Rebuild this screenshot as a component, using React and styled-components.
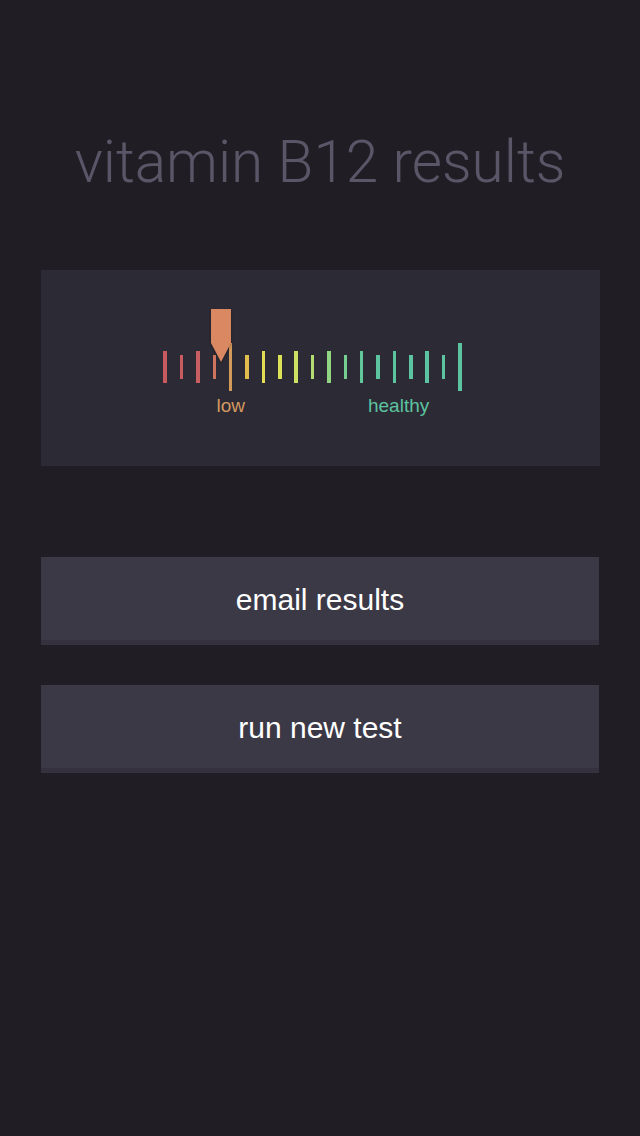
import React from "react";
import styled, { createGlobalStyle } from "styled-components";

const GlobalStyle = createGlobalStyle`
  html, body {
    margin: 0;
    padding: 0;
    background: #201e24;
  }
`;

const PAGE = styled.div`
  min-height: 1136px;
  background: #201e24;
  padding: 127px 40px 0 41px;
  box-sizing: border-box;
  font-family: "Liberation Sans", Arial, sans-serif;
`;

const TITLE = styled.h1`
  margin: 0 -40px 0 -41px;
  font-family: Roboto, "Liberation Sans", sans-serif;
  font-weight: 300;
  font-size: 58.5px;
  line-height: 70px;
  text-align: center;
  color: #5a5567;
`;

const PANEL = styled.div`
  margin-top: 73px;
  height: 196px;
  box-sizing: border-box;
  background: #2c2a35;
  padding: 73px 0 0 116px;
`;

const GAUGE = styled.div`
  position: relative;
  display: grid;
  grid-template-columns: repeat(19, 16.39px);
  grid-template-rows: 48px 22px;
  row-gap: 4px;
`;

const TICK = styled.div`
  justify-self: center;
  align-self: center;
  width: 3.5px;
  height: ${(p) => p.$h}px;
  background: ${(p) => p.$color};
  grid-row: 1;
`;

const LABEL = styled.span`
  grid-row: 2;
  grid-column: ${(p) => p.$col};
  justify-self: center;
  margin-right: ${(p) => p.$shift || 0}px;
  font-size: 19px;
  line-height: 22px;
  color: ${(p) => p.$color};
  white-space: nowrap;
`;

const MARKER = styled.svg`
  position: absolute;
  left: 54px;
  top: -34px;
  filter: drop-shadow(0 1px 1px rgba(0, 0, 0, 0.35));
`;

const BUTTONS = styled.div`
  margin-top: 91px;
  margin-right: 1px;
  display: flex;
  flex-direction: column;
  gap: 40px;
`;

const BUTTON = styled.button`
  display: block;
  width: 100%;
  height: 88px;
  padding: 1px 0 4px;
  border: none;
  border-bottom: 5px solid #34323e;
  box-sizing: border-box;
  background: #3c3947;
  color: #ffffff;
  font-family: "Liberation Sans", Arial, sans-serif;
  font-size: 30px;
  line-height: 83px;
  text-align: center;
  cursor: pointer;
`;

const TICKS = [
  "#c65a5e",
  "#c85c60",
  "#c65e62",
  "#cf755f",
  "#d49a5a",
  "#e0bd4e",
  "#e4dc52",
  "#dbe257",
  "#cbe262",
  "#b3dd72",
  "#92d582",
  "#76ce93",
  "#62c89c",
  "#5cc5a0",
  "#5cc4a0",
  "#5cc4a0",
  "#5cc4a0",
  "#5cc4a0",
  "#5cc4a0",
];

function tickHeight(i) {
  if (i === 4 || i === 18) return 48;
  return i % 2 === 0 ? 32 : 24;
}

export default function App() {
  return (
    <>
      <GlobalStyle />
      <PAGE>
        <TITLE>vitamin B12 results</TITLE>
        <PANEL>
          <GAUGE>
            {TICKS.map((c, i) => (
              <TICK key={i} $color={c} $h={tickHeight(i)} style={{ gridColumn: i + 1 }} />
            ))}
            <LABEL $col="4 / 7" $color="#d4995e">low</LABEL>
            <LABEL $col="13 / 19" $shift={8} $color="#5cc4a0">healthy</LABEL>
            <MARKER width="20" height="53" viewBox="0 0 20 53">
              <polygon points="0,0 20,0 20,34 10,53 0,34" fill="#d98862" />
            </MARKER>
          </GAUGE>
        </PANEL>
        <BUTTONS>
          <BUTTON>email results</BUTTON>
          <BUTTON>run new test</BUTTON>
        </BUTTONS>
      </PAGE>
    </>
  );
}
